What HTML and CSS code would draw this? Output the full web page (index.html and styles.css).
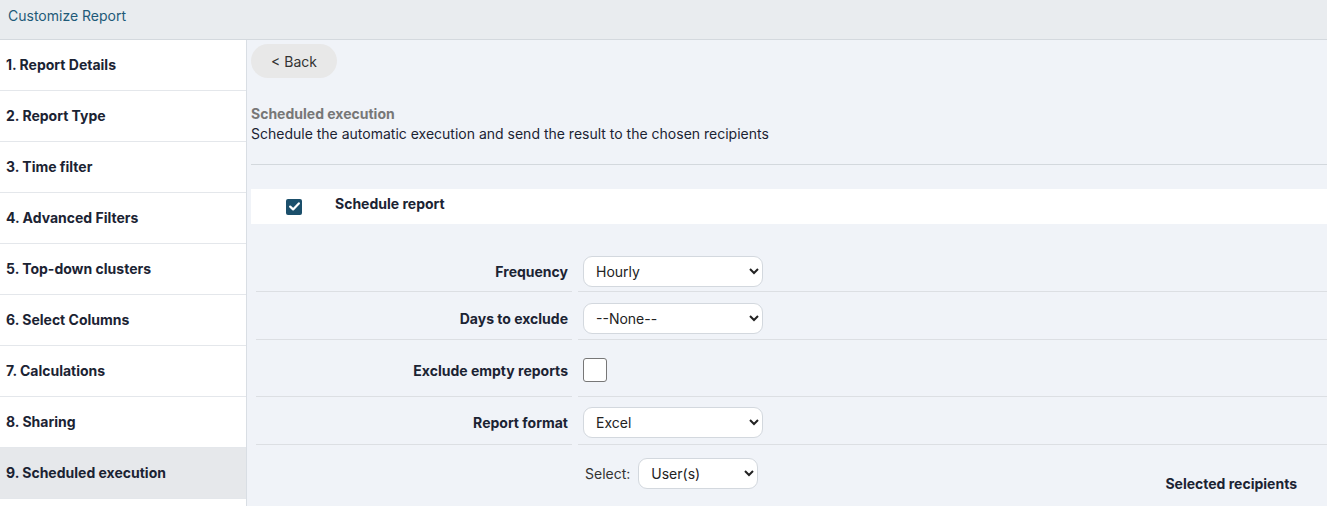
FILE: index.html
```html
<!doctype html>
<html>
  <head>
    <meta charset="utf-8">
    <title>Customize Report</title>
    <link rel="stylesheet" href="styles.css">
  </head>
<body>
<div class="header">Customize Report</div>
<div class="layout">
  <div class="sidebar">
    <div class="step">1. Report Details</div>
    <div class="step">2. Report Type</div>
    <div class="step">3. Time filter</div>
    <div class="step">4. Advanced Filters</div>
    <div class="step">5. Top-down clusters</div>
    <div class="step">6. Select Columns</div>
    <div class="step">7. Calculations</div>
    <div class="step">8. Sharing</div>
    <div class="step active">9. Scheduled execution</div>
  </div>

  <div class="main">
    <button class="back">&lt; Back</button>

    <div class="intro">
      <div class="intro_title">Scheduled execution</div>
      <div>Schedule the automatic execution and send the result to the chosen recipients</div>
    </div>

    <div class="enable_row">
      <span class="checkbox checked">
        <svg width="11" height="9" viewBox="0 0 11 9"><path d="M1.2 4.6 L4.1 7.4 L9.8 1.4" fill="none" stroke="#fff" stroke-width="2.2" stroke-linecap="round" stroke-linejoin="round"/></svg>
      </span>
      <span class="enable_label">Schedule report</span>
    </div>

    <div class="form">
      <div class="row first">
        <div class="label">Frequency</div>
        <div class="field"><select class="select"><option>Hourly</option></select></div>
      </div>
      <div class="row">
        <div class="label">Days to exclude</div>
        <div class="field"><select class="select"><option>--None--</option></select></div>
      </div>
      <div class="row tall">
        <div class="label">Exclude empty reports</div>
        <div class="field"><span class="checkbox empty"></span></div>
      </div>
      <div class="row last">
        <div class="label">Report format</div>
        <div class="field"><select class="select"><option>Excel</option></select></div>
      </div>
      <div class="recipients">
        <div class="picker">
          <span>Select:</span>
          <select class="select small"><option>User(s)</option></select>
        </div>
        <div class="recipients_title">Selected recipients</div>
      </div>
    </div>
  </div>
</div>
</body>
</html>
```

FILE: styles.css
```css
html, body {
  margin: 0;
  height: 100%;
  font-family: Inter, "Noto Sans", sans-serif;
  font-size: 14px;
  color: #1b2333;
  background: #f0f3f8;
  overflow: hidden;
}

.header {
  height: 39px;
  line-height: 32px;
  padding-left: 8px;
  background: #e9ecef;
  color: #1e5a78;
  border-bottom: 1px solid #d4d9de;
  box-sizing: content-box;
}

.layout {
  display: flex;
  height: 466px;
}

.sidebar {
  width: 246px;
  background: #fff;
  border-right: 1px solid #d9dee4;
  flex-shrink: 0;
}

.step {
  height: 50px;
  line-height: 50px;
  padding-left: 6px;
  font-weight: 700;
  border-bottom: 1px solid #e4e7eb;
}

.step.active {
  background: #e6e8eb;
}

.main {
  flex: 1;
  padding: 4px 0 0 4px;
}

.back {
  width: 86px;
  height: 34px;
  border: none;
  border-radius: 17px;
  background: #e8e8e8;
  color: #333;
  font-family: Inter, sans-serif;
  font-size: 14px;
  padding: 0;
  margin-bottom: 26px;
}

.intro {
  padding-bottom: 20px;
  border-bottom: 1px solid #d3d8dd;
  line-height: 20px;
}

.intro_title {
  color: #777;
  font-weight: 700;
}

.enable_row {
  display: flex;
  align-items: center;
  height: 35px;
  margin-top: 24px;
  background: #fff;
}

.checkbox {
  display: inline-flex;
  align-items: center;
  justify-content: center;
  box-sizing: border-box;
}

.checkbox.checked {
  width: 16px;
  height: 16px;
  margin-left: 35px;
  border-radius: 2px;
  background: #1b4f6b;
}

.enable_label {
  margin-left: 33px;
  font-weight: 700;
  margin-top: -6px;
}

.checkbox.empty {
  width: 24px;
  height: 24px;
  border: 1px solid #777;
  border-radius: 3px;
  background: #fff;
}

.form {
  margin-top: 20px;
  padding-left: 5px;
}

.row {
  display: flex;
  gap: 6px;
  height: 48px;
}

.row.tall {
  height: 57px;
}

.label, .field {
  display: flex;
  align-items: flex-start;
  padding-top: 11px;
  box-sizing: border-box;
  border-bottom: 1px solid #dcdfe3;
}

.row.first .label, .row.first .field {
  padding-top: 12px;
}

.row.last .label, .row.last .field {
  padding-top: 10px;
}

.row.tall .label, .row.tall .field {
  padding-top: 18px;
}

.label {
  width: 316px;
  justify-content: flex-end;
  padding-right: 4px;
  line-height: 31px;
  font-weight: 700;
}

.row.tall .label {
  line-height: 25px;
}

.field {
  flex: 1;
  padding-left: 5px;
}

.select {
  width: 180px;
  height: 31px;
  border: 1px solid #d3d8de;
  border-radius: 9px;
  background: #fff;
  color: #222;
  font-family: Inter, sans-serif;
  font-size: 14px;
  padding: 0 8px;
}

.select.small {
  width: 120px;
  margin-left: 8px;
}

.recipients {
  display: flex;
  justify-content: space-between;
  padding-left: 329px;
  padding-right: 30px;
}

.picker {
  display: flex;
  align-items: center;
  margin-top: 9px;
  color: #333;
}

.recipients_title {
  font-weight: 700;
  margin-top: 30px;
}
```
